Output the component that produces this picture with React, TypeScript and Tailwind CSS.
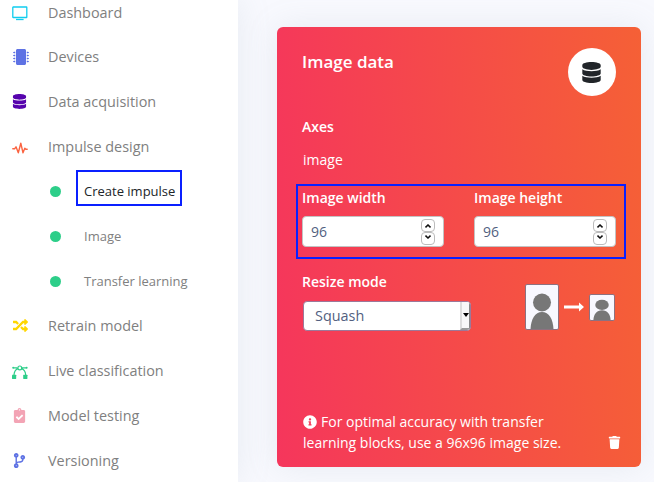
import type { ReactNode } from "react";
import { FaClipboardCheck, FaCodeBranch, FaDatabase, FaInfoCircle, FaMicrochip, FaRandom, FaTrash } from "react-icons/fa";

function MonitorIcon() {
  return (
    <svg className="mt-[3px]" width="16" height="15" viewBox="0 0 16 15" fill="none" stroke="#11cdef" strokeWidth="1.3">
      <rect x=".8" y="1" width="14" height="10.5" rx="0.3" />
      <path d="M4 13.5h7.6" />
    </svg>
  );
}

function PulseIcon() {
  return (
    <svg className="mt-[3px]" width="16" height="13" viewBox="0 0 16 13" fill="none" stroke="#fb6340" strokeWidth="1.4" strokeLinejoin="round" strokeLinecap="round">
      <path d="M.8 6.8h1.8L4 4.8l2.3 6L8.8 1.2l2.2 9.6 1.8-4.6 1 1h1.4" />
    </svg>
  );
}

function CurveIcon() {
  return (
    <svg className="mt-[3px]" width="16" height="14" viewBox="0 0 16 14" fill="none" stroke="#2dce89" strokeWidth="1.2">
      <path d="M1.5 2.9h4M10 2.9h4.5M6 3.6C3.5 4.5 2.2 6.5 2 10M9.5 3.6c2.5.9 4 2.9 4.2 6.4" />
      <circle cx="7.8" cy="2.9" r="1.9" />
      <g fill="#2dce89" stroke="none">
        <circle cx="1.2" cy="2.7" r="1" />
        <circle cx="14.6" cy="2.7" r="1" />
        <rect x="0" y="9.8" width="4.2" height="4.2" rx=".4" />
        <rect x="11.2" y="9.8" width="4.2" height="4.2" rx=".4" />
      </g>
    </svg>
  );
}

function NavItem({ icon, label, shift = "pl-3" }: { icon: ReactNode; label: string; shift?: string }) {
  return (
    <a className={`flex h-[44.8px] items-center text-[14.4px] text-[#808080] ${shift}`}>
      <span className="flex w-9 shrink-0">{icon}</span>
      <span>{label}</span>
    </a>
  );
}

function SubItem({ label, active = false }: { label: string; active?: boolean }) {
  return (
    <a className="flex h-[44.8px] items-center pl-[50px] text-[13px]">
      <span className="h-[11px] w-[11px] rounded-full bg-[#2dce89]" />
      <span
        className={
          active
            ? "-mt-[7px] ml-[15px] flex h-9 w-[106px] items-center border-2 border-[#0a20ff] pl-1.5 pt-[7.5px] text-[#212529]"
            : "ml-[23px] pt-[0.8px] text-[#808080]"
        }
      >
        {label}
      </span>
    </a>
  );
}

function StepButton({ up = false }: { up?: boolean }) {
  return (
    <span className={`flex h-[13px] w-[14px] items-center justify-center rounded-[4px] border border-[#bcbcbc] bg-white ${up ? "pt-px" : "pb-[2px]"}`}>
      <svg width="6" height="4" viewBox="0 0 6 4" fill="none" stroke="#111" strokeWidth="1.5">
        <path d={up ? "M.5 3.4 3 1l2.5 2.4" : "M.5.6 3 3 5.5.6"} />
      </svg>
    </span>
  );
}

function NumberField({ label, value }: { label: string; value: number }) {
  return (
    <label className="block w-[142px]">
      <span className="block h-[21px] text-[14px] font-semibold leading-[21px]">{label}</span>
      <span className="mt-2 flex h-[31px] items-center justify-between rounded-[4px] border border-[#c3c3c3] bg-white pl-2 pr-2 text-[14px] text-[#525f7f]">
        {value}
        <span className="flex flex-col">
          <StepButton up />
          <StepButton />
        </span>
      </span>
    </label>
  );
}

function Portrait({ className }: { className: string }) {
  return (
    <svg className={className} viewBox="0 0 32 44" preserveAspectRatio="none" fill="#777">
      <ellipse cx="16" cy="17.5" rx="9" ry="9" />
      <path d="M4.5 44C5 34 9 27 16 27s11 7 11.5 17z" />
    </svg>
  );
}

export default function App() {
  return (
    <div className="flex h-[482px] w-[654px] overflow-hidden bg-[#f8f9fe] font-['Open_Sans',sans-serif]">
      <nav className="h-full w-[238px] shrink-0 overflow-hidden bg-white shadow-[0_0_32px_rgba(136,152,170,0.15)]">
        <div className="-mt-[10px]">
          <NavItem icon={<MonitorIcon />} label="Dashboard" />
          <NavItem icon={<FaMicrochip size={16} color="#5e72e4" />} label="Devices" shift="pl-[13px] [&>span+span]:-ml-px" />
          <NavItem icon={<FaDatabase size={15} color="#5603ad" />} label="Data acquisition" />
          <NavItem icon={<PulseIcon />} label="Impulse design" />
          <SubItem label="Create impulse" active />
          <SubItem label="Image" />
          <SubItem label="Transfer learning" />
          <NavItem icon={<FaRandom size={15} color="#ffd600" />} label="Retrain model" shift="pl-[13px] [&>span+span]:-ml-px" />
          <NavItem icon={<CurveIcon />} label="Live classification" />
          <NavItem icon={<FaClipboardCheck size={15} color="#f3a4b5" />} label="Model testing" />
          <NavItem icon={<FaCodeBranch size={15} color="#5e72e4" />} label="Versioning" />
        </div>
      </nav>
      <main className="pl-[39px] pt-[27px]">
        <section className="flex h-[440px] w-[364px] flex-col rounded-[6px] bg-[linear-gradient(87deg,#f5365c_0%,#f56036_100%)] px-[25px] text-white shadow-[0_0_32px_rgba(136,152,170,0.15)]">
          <header className="flex h-[89px] shrink-0 items-start justify-between pt-[21px]">
            <h2 className="pt-px text-[17px] font-semibold leading-[26px]">Image data</h2>
            <span className="flex h-12 w-12 items-center justify-center rounded-full bg-white pr-px text-[#212529]">
              <FaDatabase size={21} />
            </span>
          </header>
          <h3 className="text-[14px] font-semibold leading-[21px]">Axes</h3>
          <p className="mt-3 pl-px text-[14px] leading-[21px]">image</p>
          <div className="-ml-[6px] mt-[14px] flex h-[75px] w-[330px] shrink-0 gap-[30px] border-2 border-[#0a20ff] pl-1 pt-px">
            <NumberField label="Image width" value={96} />
            <NumberField label="Image height" value={96} />
          </div>
          <div className="mt-3 flex justify-between">
            <div>
              <h3 className="text-[14px] font-semibold leading-[21px]">Resize mode</h3>
              <div className="ml-px mt-[9px] flex h-[30px] w-[168px] items-stretch justify-between overflow-hidden rounded-[4px] border border-[#9c7899] bg-white text-[14.4px] text-[#525f7f]">
                <span className="pl-[11px] leading-[28px]">Squash</span>
                <span className="flex w-[10px] items-center justify-center border-b-2 border-l-2 border-r-[1px] border-b-[#999] border-l-[#ddd] border-r-[#888] bg-[#f8f8f8]">
                  <svg className="shrink-0" width="6" height="4" viewBox="0 0 6 4"><path d="M0 0h6L3 4z" fill="#000" /></svg>
                </span>
              </div>
            </div>
            <div className="mr-px flex h-[46px] items-center pt-[26px]">
              <Portrait className="h-[46px] w-[34px] rounded-[2px] border border-[#8d7180] bg-[#f8f8ff]" />
              <svg className="ml-[5px]" width="20" height="10" viewBox="0 0 20 10"><path d="M0 3.5h15V.5L20 5l-5 4.5v-3H0z" fill="#fff" /></svg>
              <Portrait className="ml-[5px] h-[27px] w-[26px] rounded-[2px] border border-[#8d7180] bg-[#f8f8ff]" />
            </div>
          </div>
          <footer className="mb-[14px] mt-auto flex items-end justify-between text-[14px] leading-[21px]">
            <p className="w-[275px] pl-px">
              <FaInfoCircle size={14} className="mr-1 inline -translate-y-px" />
              For optimal accuracy with transfer learning blocks, use a 96x96 image size.
            </p>
            <FaTrash size={13} className="mb-1 -mr-[5px]" />
          </footer>
        </section>
      </main>
    </div>
  );
}
